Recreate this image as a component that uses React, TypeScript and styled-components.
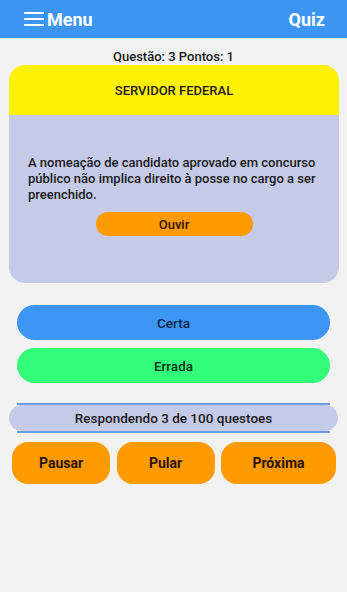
import React from "react";
import styled, { createGlobalStyle } from "styled-components";

const GlobalStyle = createGlobalStyle`
  html, body {
    margin: 0;
    padding: 0;
    background: #f2f2f2;
    font-family: Roboto, "Liberation Sans", sans-serif;
  }
  * {
    box-sizing: border-box;
  }
`;

const Page = styled.div`
  width: 347px;
  min-height: 592px;
  background: #f2f2f2;
`;

const Header = styled.header`
  height: 38px;
  background: #3d95f3;
  display: flex;
  align-items: center;
  justify-content: space-between;
  padding: 0 22px 0 24px;
  color: #fff;
`;

const MenuButton = styled.div`
  display: flex;
  align-items: center;
  gap: 3px;
  font-size: 18px;
  font-weight: 700;
`;

const Title = styled.div`
  font-size: 18px;
  font-weight: 700;
`;

const ScoreLine = styled.div`
  height: 27px;
  padding-top: 11px;
  text-align: center;
  font-size: 13px;
  font-weight: 500;
  line-height: 16px;
  color: #1a1a1a;
`;

const Card = styled.section`
  margin: 0 8px 0 9px;
  border-radius: 16px;
  overflow: hidden;
  background: #c5cae9;
`;

const CardHead = styled.div`
  height: 50px;
  background: #fff200;
  display: flex;
  align-items: center;
  justify-content: center;
  font-size: 13px;
  font-weight: 500;
  color: #1a1a1a;
`;

const CardBody = styled.div`
  padding: 40px 6px 47px 19px;
  display: flex;
  flex-direction: column;
  align-items: center;
`;

const Statement = styled.p`
  margin: 0;
  align-self: stretch;
  font-size: 13px;
  font-weight: 500;
  line-height: 16px;
  color: #1a1a1a;
`;

const ListenButton = styled.button`
  margin: 9px 13px 0 0;
  width: 157px;
  height: 24px;
  border: none;
  border-radius: 12px;
  background: #ff9a00;
  font-family: inherit;
  font-size: 13px;
  font-weight: 500;
  color: #2a1200;
`;

const Answers = styled.div`
  margin: 22px 17px 0;
  display: flex;
  flex-direction: column;
  gap: 8px;
`;

const AnswerButton = styled.button<{ $bg: string; $fg: string }>`
  height: 35px;
  border: none;
  border-radius: 18px;
  background: ${(p) => p.$bg};
  color: ${(p) => p.$fg};
  font-family: inherit;
  font-size: 13.5px;
  font-weight: 500;
`;

const Progress = styled.div`
  margin: 20px 17px 0;
  border-top: 2px solid #6c9be2;
  border-bottom: 2px solid #6c9be2;
`;

const ProgressBar = styled.div`
  margin: 0 -8px;
  height: 26px;
  border-radius: 13px;
  background: #c5cae9;
  display: flex;
  align-items: center;
  justify-content: center;
  font-size: 13.5px;
  font-weight: 500;
  color: #1a1a1a;
`;

const Controls = styled.div`
  margin: 9px 11px 0 12px;
  display: grid;
  grid-template-columns: 98px 98px 1fr;
  gap: 6.5px;
`;

const ControlButton = styled.button`
  height: 42px;
  border: none;
  border-radius: 16px;
  background: #ff9a00;
  font-family: inherit;
  font-size: 14px;
  font-weight: 700;
  color: #2a1200;
`;

const MenuIcon = () => (
  <svg width="20" height="16" viewBox="0 0 20 16">
    <g stroke="#fff" strokeWidth="2.2" strokeLinecap="round">
      <line x1="1" y1="2" x2="19" y2="2" />
      <line x1="1" y1="8" x2="19" y2="8" />
      <line x1="1" y1="14" x2="19" y2="14" />
    </g>
  </svg>
);

export default function App() {
  return (
    <Page>
      <GlobalStyle />
      <Header>
        <MenuButton>
          <MenuIcon />
          Menu
        </MenuButton>
        <Title>Quiz</Title>
      </Header>
      <ScoreLine>Questão: 3 Pontos: 1</ScoreLine>
      <Card>
        <CardHead>SERVIDOR FEDERAL</CardHead>
        <CardBody>
          <Statement>
            A nomeação de candidato aprovado em concurso público não implica
            direito à posse no cargo a ser preenchido.
          </Statement>
          <ListenButton>Ouvir</ListenButton>
        </CardBody>
      </Card>
      <Answers>
        <AnswerButton $bg="#3d95f5" $fg="#0d1f4a">
          Certa
        </AnswerButton>
        <AnswerButton $bg="#33fc7a" $fg="#0a3316">
          Errada
        </AnswerButton>
      </Answers>
      <Progress>
        <ProgressBar>Respondendo 3 de 100 questoes</ProgressBar>
      </Progress>
      <Controls>
        <ControlButton>Pausar</ControlButton>
        <ControlButton>Pular</ControlButton>
        <ControlButton>Próxima</ControlButton>
      </Controls>
    </Page>
  );
}
